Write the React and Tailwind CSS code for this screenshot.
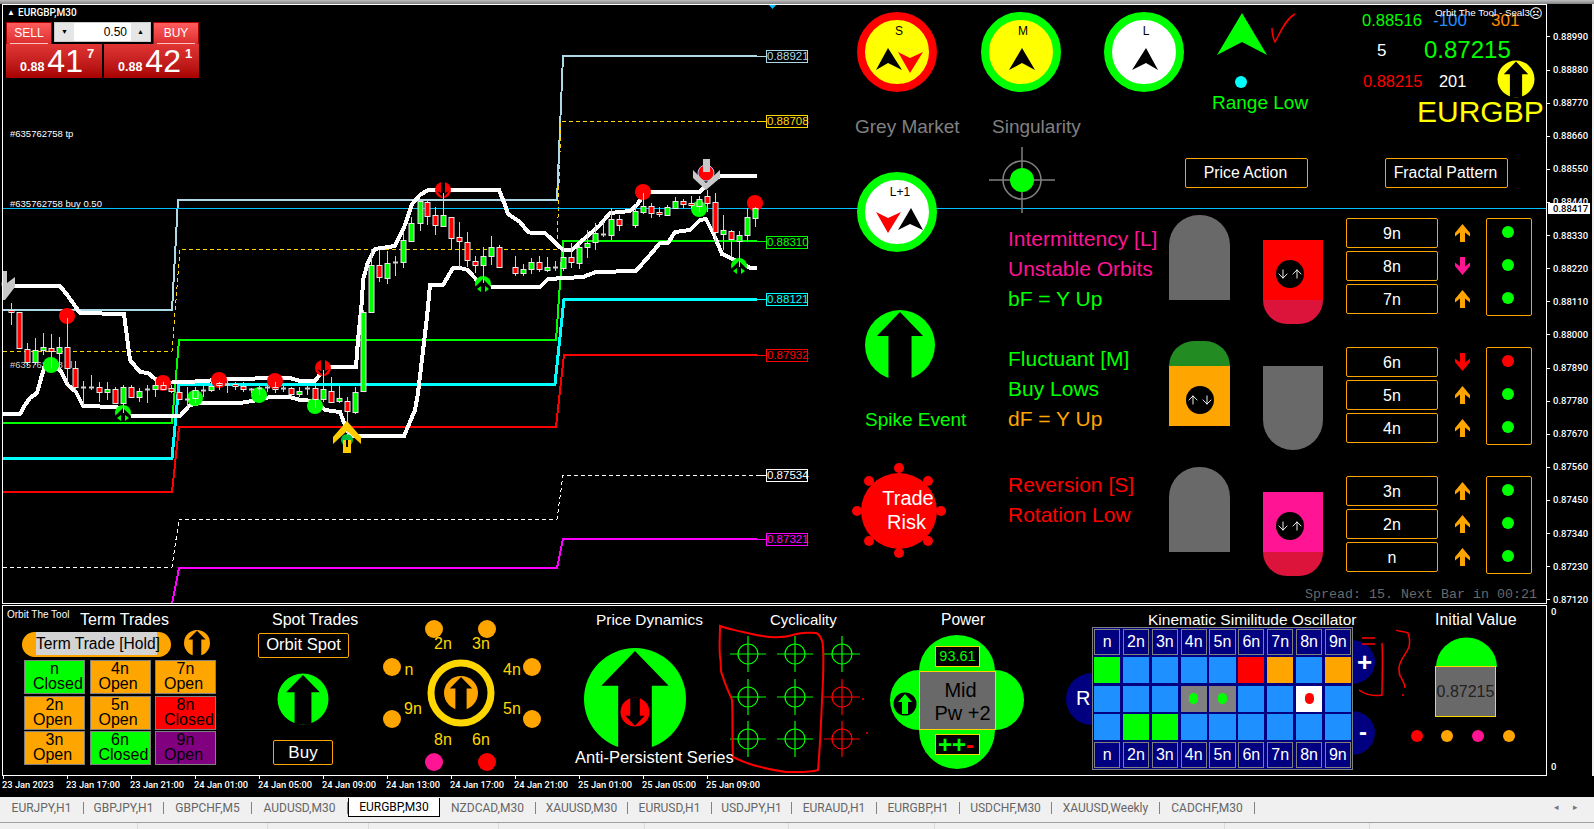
import React from 'react';
import { ArrowUp, ArrowDown } from 'lucide-react';

const GREEN = '#00ff00';
const ORANGE = '#ffa500';

// x, bodyTop, bodyBottom, wickTop, wickBottom, type (g, r, d = doji)
const candles = [
  [11, 310, 312, 303, 325, 'r'], [19, 312, 348, 312, 348, 'r'], [27, 349, 362, 343, 366, 'r'], [35, 350, 362, 338, 365, 'g'],
  [43, 347, 350, 333, 355, 'g'], [51, 348, 351, 334, 368, 'r'], [59, 347, 353, 337, 370, 'g'], [67, 347, 368, 318, 383, 'r'],
  [75, 368, 387, 361, 390, 'r'], [83, 387, 388, 381, 405, 'd'], [91, 387, 388, 375, 390, 'd'], [99, 387, 392, 382, 402, 'r'],
  [107, 389, 392, 382, 400, 'g'], [115, 389, 403, 387, 404, 'r'], [123, 387, 403, 385, 413, 'g'], [131, 387, 397, 385, 398, 'r'],
  [139, 391, 397, 388, 402, 'g'], [147, 389, 389, 385, 403, 'd'], [155, 385, 389, 380, 397, 'g'], [163, 385, 389, 382, 390, 'r'],
  [171, 388, 391, 385, 393, 'r'], [179, 392, 399, 391, 400, 'r'], [187, 399, 399, 387, 407, 'd'], [195, 390, 398, 387, 403, 'g'],
  [203, 390, 390, 385, 397, 'd'], [211, 386, 390, 382, 392, 'g'], [219, 383, 385, 382, 390, 'r'], [227, 384, 384, 380, 393, 'd'],
  [235, 384, 385, 382, 390, 'r'], [243, 386, 389, 382, 392, 'r'], [251, 389, 389, 388, 393, 'd'], [259, 388, 390, 386, 395, 'd'],
  [267, 387, 387, 386, 392, 'd'], [275, 387, 389, 382, 393, 'r'], [283, 388, 388, 386, 392, 'd'], [291, 388, 394, 387, 397, 'r'],
  [299, 391, 394, 387, 397, 'g'], [307, 388, 388, 386, 395, 'd'], [315, 388, 399, 383, 408, 'r'], [323, 389, 399, 370, 402, 'g'],
  [331, 391, 402, 377, 403, 'r'], [339, 398, 401, 386, 403, 'g'], [347, 401, 411, 397, 435, 'r'], [355, 392, 412, 387, 414, 'g'],
  [363, 312, 391, 310, 391, 'g'], [371, 265, 312, 250, 312, 'g'], [379, 265, 277, 250, 282, 'r'], [387, 263, 278, 251, 284, 'g'],
  [395, 262, 262, 256, 276, 'd'], [403, 240, 262, 232, 268, 'g'], [411, 223, 241, 217, 241, 'g'], [420, 201, 223, 199, 231, 'g'],
  [427, 202, 216, 200, 225, 'r'], [435, 215, 225, 207, 235, 'r'], [443, 215, 226, 193, 226, 'g'], [451, 217, 238, 217, 249, 'r'],
  [459, 237, 241, 222, 267, 'r'], [467, 242, 260, 232, 267, 'r'], [475, 261, 265, 256, 273, 'r'], [483, 256, 265, 247, 283, 'g'],
  [491, 247, 256, 236, 265, 'g'], [499, 247, 267, 245, 268, 'r'], [515, 267, 273, 256, 276, 'r'], [523, 269, 273, 264, 276, 'g'],
  [531, 262, 269, 258, 274, 'g'], [539, 262, 269, 256, 272, 'r'], [547, 267, 270, 257, 272, 'g'], [555, 267, 267, 261, 271, 'd'],
  [563, 257, 268, 247, 271, 'g'], [571, 257, 262, 243, 268, 'r'], [579, 247, 263, 243, 269, 'g'], [587, 243, 247, 230, 258, 'g'],
  [595, 233, 242, 223, 250, 'g'], [603, 234, 234, 222, 237, 'd'], [611, 219, 235, 208, 240, 'g'], [619, 219, 225, 215, 231, 'r'],
  [635, 211, 225, 207, 228, 'g'], [643, 206, 212, 193, 214, 'g'], [651, 206, 213, 203, 218, 'r'], [659, 212, 214, 207, 217, 'r'],
  [667, 207, 215, 205, 215, 'g'], [675, 201, 208, 197, 209, 'g'], [683, 201, 204, 199, 208, 'r'], [691, 203, 205, 196, 208, 'r'],
  [699, 199, 206, 196, 212, 'g'], [707, 196, 203, 190, 212, 'r'], [715, 202, 232, 193, 242, 'r'], [723, 230, 234, 215, 250, 'g'],
  [731, 231, 239, 230, 257, 'r'], [739, 235, 241, 231, 267, 'g'], [747, 217, 235, 208, 242, 'g'], [755, 208, 218, 207, 227, 'g'],
];

const upperChannel = '3,286 60,286 68,296 80,313 124,314 130,360 140,372 148,373 160,383 207,381 220,379 290,378 300,381 315,381 322,372 330,367 356,367 358,340 362,300 363,280 368,262 375,249 395,246 405,225 412,204 420,195 428,190 499,190 505,205 508,214 520,222 528,232 532,233 545,233 563,250 572,250 585,238 600,225 610,213 630,211 637,205 642,197 650,192 700,192 705,186 720,176 757,176';
const lowerChannel = '3,414 20,414 25,405 30,398 37,393 42,375 45,365 60,370 68,385 76,392 83,406 117,407 130,416 180,416 190,405 200,403 240,403 258,400 270,397 290,397 300,400 315,401 325,410 340,412 345,425 350,436 404,436 415,410 418,393 427,317 430,285 443,285 453,268 460,268 468,270 480,284 490,287 540,287 548,279 583,277 596,272 636,271 650,255 660,243 668,243 675,232 690,230 700,220 706,219 715,237 722,254 735,260 750,268 757,268';

const steps = [
  { points: '3,310 172,310 178,200 557,200 563,56 757,56', stub: 56, color: '#add8e6', width: 2 },
  { points: '3,351 172,351 180,249 557,249 561,121 766,121', stub: 121, color: '#ffd700', width: 1, dash: '4 3' },
  { points: '3,423 172,423 179,340 556,340 563,241 757,241', stub: 241, color: GREEN, width: 2 },
  { points: '3,458 172,458 179,384 555,384 564,299 757,299', stub: 299, color: '#00ffff', width: 3 },
  { points: '3,492 172,492 179,427 556,427 564,355 757,355', stub: 355, color: '#ff0000', width: 2 },
  { points: '3,567 172,567 179,519 557,519 563,475 766,475', stub: 475, color: '#ffffff', width: 1, dash: '4 3' },
  { points: '172,604 179,568 557,568 563,539 757,539', stub: 539, color: '#ff00ff', width: 2 },
];

const priceTicks = ['0.88990', '0.88880', '0.88770', '0.88660', '0.88550', '0.88440', '0.88330', '0.88220', '0.88110', '0.88000', '0.87890', '0.87780', '0.87670', '0.87560', '0.87450', '0.87340', '0.87230', '0.87120'];
const timeTicks = ['23 Jan 2023', '23 Jan 17:00', '23 Jan 21:00', '24 Jan 01:00', '24 Jan 05:00', '24 Jan 09:00', '24 Jan 13:00', '24 Jan 17:00', '24 Jan 21:00', '25 Jan 01:00', '25 Jan 05:00', '25 Jan 09:00'];

const tabs = [
  { name: 'EURJPY,H1', cls: 'w-[84px]' }, { name: 'GBPJPY,H1', cls: 'w-[80px]' }, { name: 'GBPCHF,M5', cls: 'w-[88px]' },
  { name: 'AUDUSD,M30', cls: 'w-[96px]' }, { name: 'EURGBP,M30', cls: 'w-[92px]', active: true }, { name: 'NZDCAD,M30', cls: 'w-[96px]' },
  { name: 'XAUUSD,M30', cls: 'w-[92px]' }, { name: 'EURUSD,H1', cls: 'w-[84px]' }, { name: 'USDJPY,H1', cls: 'w-[80px]' },
  { name: 'EURAUD,H1', cls: 'w-[85px]' }, { name: 'EURGBP,H1', cls: 'w-[83px]' }, { name: 'USDCHF,M30', cls: 'w-[92px]' },
  { name: 'XAUUSD,Weekly', cls: 'w-[108px]' }, { name: 'CADCHF,M30', cls: 'w-[95px]' },
];

const priceLabels = [
  { text: '0.88921', cls: 'top-[46px] text-[#add8e6] border-[#add8e6]' },
  { text: '0.88708', cls: 'top-[111px] text-[#ffd700] border-[#ffd700]' },
  { text: '0.88310', cls: 'top-[232px] text-[#00ff00] border-[#00ff00]' },
  { text: '0.88121', cls: 'top-[289px] text-[#00ffff] border-[#00ffff]' },
  { text: '0.87932', cls: 'top-[345px] text-[#ff0000] border-[#ff0000]' },
  { text: '0.87534', cls: 'top-[465px] text-white border-white' },
  { text: '0.87321', cls: 'top-[529px] text-[#ff00ff] border-[#ff00ff]' },
];

const cycleGroups = [
  { rows: [['9n', 'up', 'g'], ['8n', 'pink', 'g'], ['7n', 'up', 'g']] },
  { rows: [['6n', 'red', 'r'], ['5n', 'up', 'g'], ['4n', 'up', 'g']] },
  { rows: [['3n', 'up', 'g'], ['2n', 'up', 'g'], ['n', 'up', 'g']] },
];

const tradeCells = [
  ['n', 'Closed', 'bg-[#00ff00]'], ['4n', 'Open', 'bg-[#ffa500]'], ['7n', 'Open', 'bg-[#ffa500]'],
  ['2n', 'Open', 'bg-[#ffa500]'], ['5n', 'Open', 'bg-[#ffa500]'], ['8n', 'Closed', 'bg-[#ff0000]'],
  ['3n', 'Open', 'bg-[#ffa500]'], ['6n', 'Closed', 'bg-[#00ff00]'], ['9n', 'Open', 'bg-[#800080]'],
];

const orbitLabels = [
  { t: '2n', cls: 'left-[443px] top-[30px]' }, { t: '3n', cls: 'left-[481px] top-[30px]' },
  { t: 'n', cls: 'left-[409px] top-[56px]' }, { t: '4n', cls: 'left-[512px] top-[56px]' },
  { t: '9n', cls: 'left-[413px] top-[95px]' }, { t: '5n', cls: 'left-[512px] top-[95px]' },
  { t: '8n', cls: 'left-[443px] top-[126px]' }, { t: '6n', cls: 'left-[481px] top-[126px]' },
];

const oscHeader = ['n', '2n', '3n', '4n', '5n', '6n', '7n', '8n', '9n'];
const B = 'bg-[#1e90ff]';
const oscRows = [
  ['bg-[#00ff00]', B, B, B, B, 'bg-[#ff0000]', 'bg-[#ffa500]', B, 'bg-[#ffa500]'],
  [B, B, B, 'bg-[#808080]', 'bg-[#808080]', B, B, 'bg-white', B],
  [B, 'bg-[#00ff00]', 'bg-[#00ff00]', B, B, B, B, B, B],
];

// circle with a block arrow cut out of it; r scales the whole shape
function Disc({ cx, cy, r, fill, arrow = '#000000', down = false }) {
  return (
    <g transform={`translate(${cx} ${cy}) scale(${r / 50} ${(down ? -1 : 1) * r / 50})`}>
      <circle r="50" fill={fill} />
      <polygon fill={arrow} points="0,-47 33,-13 16.5,-13 16.5,50 -16.5,50 -16.5,-13 -33,-13" />
    </g>
  );
}

function Crosshair({ cx, cy, color }) {
  return (
    <g stroke={color} strokeWidth="1.2" fill="none">
      <circle cx={cx} cy={cy} r="10" />
      <path d={`M${cx - 18} ${cy}H${cx + 18}M${cx} ${cy - 18}V${cy + 18}`} />
    </g>
  );
}

function RowArrow({ kind }) {
  const fill = kind === 'up' ? ORANGE : kind === 'pink' ? '#ff1493' : '#ff0000';
  return (
    <svg width="15" height="18" viewBox="0 0 15 18" className={kind === 'up' ? '' : 'rotate-180'}>
      <polygon fill={fill} points="7.5,0 15,9 15,12.5 10,8.5 10,18 5,18 5,8.5 0,12.5 0,9" />
    </svg>
  );
}

function SmallArrows({ first = 'down' }) {
  const A = first === 'down' ? ArrowDown : ArrowUp;
  const C = first === 'down' ? ArrowUp : ArrowDown;
  return (
    <div className="flex h-[28px] w-[28px] items-center justify-center rounded-full bg-black text-white">
      <A size={14} strokeWidth={1.6} />
      <C size={14} strokeWidth={1.6} />
    </div>
  );
}

function ChartDrawing() {
  return (
    <svg className="absolute inset-0" width="1547" height="600" viewBox="0 4 1547 600">
      {/* indicator steps */}
      {steps.map((s) => (
        <g key={s.points} shapeRendering="crispEdges">
          <polyline points={s.points} fill="none" stroke={s.color} strokeWidth={s.width} strokeDasharray={s.dash} />
          <path d={`M757 ${s.stub}H767`} stroke={s.color} strokeWidth="1" />
        </g>
      ))}
      <path d="M3 208.5H1547" stroke="#00bfff" strokeWidth="1" />
      <polygon points="768,4 777,4 772.5,9" fill="#00bfff" />

      {/* channel */}
      <polyline points={upperChannel} fill="none" stroke="#fff" strokeWidth="4" shapeRendering="crispEdges" />
      <polyline points={lowerChannel} fill="none" stroke="#fff" strokeWidth="4" shapeRendering="crispEdges" />

      {/* signal dots */}
      {[[67, 316], [163, 383], [219, 380], [275, 381], [643, 192], [755, 203]].map(([x, y]) => (
        <circle key={x} cx={x} cy={y} r="8" fill="#ff0000" />
      ))}
      {[[51, 365], [195, 398], [259, 395], [315, 406], [699, 209]].map(([x, y]) => (
        <circle key={x} cx={x} cy={y} r="8" fill={GREEN} />
      ))}
      {[[323, 368], [443, 190]].map(([x, y]) => (
        <g key={x}>
          <circle cx={x} cy={y} r="8" fill="#ff0000" />
          <path d={`M${x - 6} ${y + 1}L${x} ${y + 8}L${x + 6} ${y + 1}L${x + 2} ${y + 3}V${y - 8}H${x - 2}V${y + 3}Z`} fill="#000" />
        </g>
      ))}
      {[[123, 413], [483, 284], [739, 266]].map(([x, y]) => (
        <g key={x}>
          <circle cx={x} cy={y} r="8" fill={GREEN} />
          <path d={`M${x} ${y - 5}L${x + 8} ${y + 3}V${y + 9}H${x - 8}V${y + 3}Z`} fill="#000" />
          <path d={`M${x - 6} ${y + 5}L${x - 2} ${y + 2}V${y + 8}ZM${x + 6} ${y + 5}L${x + 2} ${y + 2}V${y + 8}Z`} fill={GREEN} />
        </g>
      ))}

      {/* marks sitting behind the candles */}
      <circle cx="347" cy="440" r="6" fill="#00c040" />
      <circle cx="706" cy="173" r="8" fill="#ff0000" stroke="#a0c8ff" strokeWidth="1" />
      <circle cx="4" cy="284" r="3" fill="#ff0000" />

      {/* candles */}
      {candles.map(([x, top, bottom, hi, lo, type]) => (
        <g key={x}>
          <path d={`M${x + 0.5} ${hi}V${lo}`} stroke="#cfcfcf" strokeWidth="1" />
          {type === 'd' ? (
            <path d={`M${x - 2} ${top + 0.5}H${x + 3}`} stroke="#cfcfcf" strokeWidth="2" />
          ) : (
            <rect x={x - 2} y={top + 0.5} width="5" height={Math.max(bottom - top, 2)} fill={type === 'g' ? GREEN : '#ff0000'} stroke="#e8e8e8" strokeWidth="1" />
          )}
        </g>
      ))}

      {/* position arrows */}
      <polygon points="347,421 361,437 361,444 347,431 333,444 333,437" fill="#ffcc00" />
      <rect x="343" y="440" width="8" height="13" fill="#ffcc00" />
      <path d="M347 440V447" stroke="#000" strokeWidth="2" />
      <polygon points="693,170 706,183 720,170 720,178 706,190 693,178" fill="#c8c8c8" />
      <rect x="703" y="159" width="7" height="13" fill="#c8c8c8" />
      <polygon points="3,271 7,271 7,283 15,277 15,287 5,300 3,300" fill="#c8c8c8" />

      {/* timeframe rings */}
      <circle cx="897" cy="52" r="36" fill="#ffff00" stroke="#ff0000" strokeWidth="8" />
      <polygon points="888,48 902,70 888,63 876,70" fill="#000" />
      <polygon points="898,52 910,58 923,52 910,73" fill="#ff0000" />
      <circle cx="1021" cy="52" r="36" fill="#ffff00" stroke={GREEN} strokeWidth="8" />
      <polygon points="1022,48 1035,70 1022,63 1009,70" fill="#000" />
      <circle cx="1144" cy="52" r="36" fill="#fff" stroke={GREEN} strokeWidth="8" />
      <polygon points="1146,48 1158,70 1146,63 1132,70" fill="#000" />
      <circle cx="897" cy="212" r="36" fill="#fff" stroke={GREEN} strokeWidth="8" />
      <polygon points="876,212 888,218 901,212 888,233" fill="#ff0000" />
      <polygon points="911,208 923,230 910,224 898,230" fill="#000" />

      {/* singularity target */}
      <circle cx="1022" cy="180" r="19" fill="none" stroke="#808080" strokeWidth="1.5" />
      <path d="M989 180H1055M1022 147V213" stroke="#808080" strokeWidth="1.5" />
      <circle cx="1022" cy="180" r="12" fill={GREEN} />

      {/* range arrow, note, dot */}
      <polygon points="1242,13 1267,55 1242,42 1217,55" fill={GREEN} />
      <path d="M1272 28C1272 33 1273 38 1275 42C1279 36 1284 20 1295 14" fill="none" stroke="#ff0000" strokeWidth="1.5" />
      <circle cx="1241" cy="82" r="6" fill="#00ffff" />
      <Disc cx={1516} cy={79} r={18.5} fill="#ffff00" />

      <Disc cx={900} cy={345} r={35} fill={GREEN} />

      {/* trade risk burst */}
      {[[899, 468], [857, 511], [941, 511], [869, 481], [928, 481], [869, 541], [928, 541], [899, 553]].map(([x, y]) => (
        <circle key={`${x}-${y}`} cx={x} cy={y} r="5" fill="#ff0000" />
      ))}
      <circle cx="899" cy="511" r="38" fill="#ff0000" />
    </svg>
  );
}

function PanelDrawing() {
  return (
    <svg className="absolute inset-0" width="1547" height="171" viewBox="0 605 1547 171">
      <Disc cx={197} cy={643} r={13} fill={ORANGE} />
      <Disc cx={303} cy={699} r={25.5} fill={GREEN} />

      {/* orbit */}
      {[[434, 629, ORANGE], [487, 629, ORANGE], [392, 667, ORANGE], [532, 667, ORANGE], [392, 719, ORANGE], [532, 719, ORANGE], [434, 762, '#ff1493'], [487, 762, '#ff0000']].map(([x, y, c]) => (
        <circle key={`${x}-${y}`} cx={x} cy={y} r="9" fill={c} />
      ))}
      <circle cx="461" cy="693" r="30" fill="none" stroke="#ffd700" strokeWidth="7" />
      <Disc cx={461} cy={693} r={17} fill={ORANGE} />

      <Disc cx={635} cy={699} r={51} fill={GREEN} />
      <Disc cx={635} cy={712} r={14.5} fill="#ff0000" down />

      {/* cycle targets */}
      {[[748, 654], [795, 654], [842, 654], [748, 697], [795, 697], [748, 739], [795, 739]].map(([x, y]) => (
        <Crosshair key={`${x}-${y}`} cx={x} cy={y} color={GREEN} />
      ))}
      <Crosshair cx={842} cy={697} color="#ff0000" />
      <Crosshair cx={842} cy={739} color="#ff0000" />
      <circle cx="863" cy="699" r="1" fill="#ff0000" />
      <circle cx="867" cy="733" r="1" fill="#ff0000" />
      <path d="M720 626C728 629 735 630 743 632C755 635 768 638 780 637C790 637 796 633 803 633C810 633 816 632 818 634C822 638 823 642 823 647C824 665 823 683 822 700C821 725 820 748 818 770C808 773 797 772 787 772C775 771 764 768 753 765C746 763 739 760 733 757C732 738 733 718 732 700C729 692 725 685 723 677C719 670 722 665 720 657C719 647 720 636 720 626Z" fill="none" stroke="#ff0000" strokeWidth="2" />

      {/* power lobes */}
      <ellipse cx="957" cy="671" rx="38" ry="36" fill={GREEN} />
      <ellipse cx="957" cy="730" rx="38" ry="39" fill={GREEN} />
      <ellipse cx="919" cy="700" rx="29" ry="30" fill={GREEN} />
      <ellipse cx="995" cy="700" rx="29" ry="30" fill={GREEN} />
      <circle cx="905" cy="704" r="11.5" fill="#000" />
      <polygon points="905,694 912,702 908,702 908,714 902,714 902,702 898,702" fill={GREEN} />

      {/* oscillator lobes */}
      <ellipse cx="1092" cy="699" rx="26" ry="26" fill="#000080" />
      <ellipse cx="1352" cy="662" rx="23" ry="22" fill="#000080" />
      <ellipse cx="1352" cy="733" rx="23" ry="22" fill="#000080" />

      {/* hand notes */}
      <path d="M1362 638H1375M1362 644H1375M1382 643C1383 660 1382 680 1382 695C1376 696 1367 696 1359 690M1396 630C1399 632 1404 631 1408 633C1410 638 1410 642 1409 647C1406 654 1400 660 1399 667C1399 672 1400 677 1401 677C1403 682 1405 684 1405 688M1403 694V696" fill="none" stroke="#ff0000" strokeWidth="1.5" />

      {/* initial value dome and dots */}
      <path d="M1436 667A30 29 0 0 1 1497 667Z" fill={GREEN} />
      {[[1417, '#ff0000'], [1447, ORANGE], [1478, '#ff1493'], [1509, ORANGE]].map(([x, c]) => (
        <circle key={x} cx={x} cy="736" r="6" fill={c} />
      ))}
    </svg>
  );
}

function TradePanel() {
  return (
    <div className="absolute left-[6px] top-[18px] flex w-[193px] flex-col text-white">
      <div className="flex h-[22px] justify-between">
        <div className="h-[23px] w-[46px] border border-[#a80000] bg-gradient-to-b from-[#ff5c5c] to-[#d92c2c] px-[3px] text-center text-[12px] leading-[20px]">
          <div className="border-b border-[#ffc0c0] pb-0">SELL</div>
        </div>
        <div className="flex h-[20px] w-[97px] bg-[#c8c8c8] p-px text-black">
          <div className="flex w-[19px] items-center justify-center bg-[#e6e6e6] text-[7px]">▼</div>
          <div className="w-[57px] bg-white pr-[4px] text-right text-[12px] leading-[18px]">0.50</div>
          <div className="flex w-[19px] items-center justify-center bg-[#e6e6e6] text-[7px]">▲</div>
        </div>
        <div className="h-[23px] w-[46px] border border-[#a80000] bg-gradient-to-b from-[#ff5c5c] to-[#d92c2c] px-[3px] text-center text-[12px] leading-[20px]">
          <div className="border-b border-[#ffc0c0]">BUY</div>
        </div>
      </div>
      <div className="flex justify-between">
        <div className="flex h-[34px] w-[96px] items-start bg-gradient-to-b from-[#e23535] to-[#a80000] pl-[14px]">
          <span className="mt-[15px] text-[12.5px] font-bold leading-[16px]">0.88</span>
          <span className="ml-[3px] text-[32px] leading-[34px]">41</span>
          <span className="ml-[4px] mt-[2px] text-[13px] font-bold leading-[16px]">7</span>
        </div>
        <div className="flex h-[34px] w-[95px] items-start bg-gradient-to-b from-[#e23535] to-[#a80000] pl-[14px]">
          <span className="mt-[15px] text-[12.5px] font-bold leading-[16px]">0.88</span>
          <span className="ml-[3px] text-[32px] leading-[34px]">42</span>
          <span className="ml-[4px] mt-[2px] text-[13px] font-bold leading-[16px]">1</span>
        </div>
      </div>
    </div>
  );
}

function SignalBlocks() {
  return (
    <div className="absolute left-[1008px] top-[211px] flex text-[21px] leading-[30px]">
      <div className="flex w-[161px] flex-col pt-[9px] whitespace-nowrap">
        <div className="text-[#ff1493]">
          <div>Intermittency [L]</div>
          <div>Unstable Orbits</div>
          <div className="text-[#00ff00]">bF = Y Up</div>
        </div>
        <div className="mt-[30px] text-[#00ff00]">
          <div>Fluctuant [M]</div>
          <div>Buy Lows</div>
          <div className="text-[#ffa500]">dF = Y Up</div>
        </div>
        <div className="mt-[36px] text-[#ff0000]">
          <div>Reversion [S]</div>
          <div>Rotation Low</div>
        </div>
      </div>
      <div className="flex w-[61px] flex-col gap-[41px]">
        <div className="h-[85px] rounded-t-[30px] bg-[#696969]" />
        <div className="flex h-[85px] flex-col">
          <div className="h-[25px] rounded-t-[30px] bg-[#228b22]" />
          <div className="flex h-[60px] items-center justify-center bg-[#ffa500] pt-[8px]"><SmallArrows first="up" /></div>
        </div>
        <div className="h-[85px] rounded-t-[30px] bg-[#696969]" />
      </div>
      <div className="ml-[33px] mt-[25px] flex w-[60px] flex-col gap-[42px]">
        <div className="flex h-[84px] flex-col">
          <div className="flex h-[60px] items-center justify-center bg-[#ff0000] pr-[6px] pt-[8px]"><SmallArrows /></div>
          <div className="h-[24px] rounded-b-[30px] bg-[#dc143c]" />
        </div>
        <div className="h-[84px] rounded-b-[30px] bg-[#696969]" />
        <div className="flex h-[84px] flex-col">
          <div className="flex h-[60px] items-center justify-center bg-[#ff1493] pr-[6px] pt-[8px]"><SmallArrows /></div>
          <div className="h-[24px] rounded-b-[30px] bg-[#dc143c]" />
        </div>
      </div>
      <div className="ml-[23px] mt-[3px] flex flex-col gap-[31px]">
        {cycleGroups.map((group) => (
          <div key={group.rows[0][0]} className="flex h-[98px]">
            <div className="flex w-[92px] flex-col gap-[3px]">
              {group.rows.map(([label]) => (
                <div key={label} className="flex h-[30px] items-center justify-center rounded-[2px] border border-[#ffa500] pt-px text-[16px] text-white">{label}</div>
              ))}
            </div>
            <div className="flex w-[48px] flex-col gap-[3px]">
              {group.rows.map(([label, arrow]) => (
                <div key={label} className="flex h-[30px] items-center justify-center"><RowArrow kind={arrow} /></div>
              ))}
            </div>
            <div className="flex w-[46px] flex-col items-center gap-[21px] rounded-[2px] border border-[#ffa500] pr-[2px] pt-[7px]">
              {group.rows.map(([label, , dot]) => (
                <div key={label} className={dot === 'g' ? 'h-[12px] w-[12px] rounded-full bg-[#00ff00]' : 'h-[12px] w-[12px] rounded-full bg-[#ff0000]'} />
              ))}
            </div>
          </div>
        ))}
      </div>
    </div>
  );
}

function Oscillator() {
  return (
    <div className="absolute left-[1092px] top-[22px] grid h-[143px] w-[261px] grid-cols-9 grid-rows-[26px_26px_26px_26px_26px] content-center gap-x-[2.6px] gap-y-[2.4px] border border-[#808080] bg-[#000080] px-[1px] text-white">
      {oscHeader.map((h) => (
        <div key={h} className="flex items-center justify-center border border-[#808080] text-[16px]">{h}</div>
      ))}
      {oscRows.map((row, r) =>
        row.map((c, i) => (
          <div key={`${r}-${i}`} className={`flex items-center justify-center ${c}`}>
            {r === 1 && (i === 3 || i === 4) && <div className="h-[11px] w-[9px] rounded-full bg-[#00ff00]" />}
            {r === 1 && i === 7 && <div className="h-[11px] w-[9px] rounded-full bg-[#ff0000]" />}
          </div>
        )),
      )}
      {oscHeader.map((h) => (
        <div key={`f-${h}`} className="flex items-center justify-center border border-[#808080] text-[16px]">{h}</div>
      ))}
    </div>
  );
}

function IndicatorPanel() {
  return (
    <div className="relative h-[171px] w-[1547px]">
      <PanelDrawing />
      <div className="absolute left-[7px] top-[4px] text-[10px] leading-[12px] text-white">Orbit The Tool</div>

      <div className="absolute left-[80px] top-[6px] text-[16px] leading-[18px] text-white">Term Trades</div>
      <div className="absolute left-[272px] top-[6px] text-[16px] leading-[18px] text-white">Spot Trades</div>
      <div className="absolute left-[596px] top-[6px] text-[15.4px] leading-[18px] text-white">Price Dynamics</div>
      <div className="absolute left-[770px] top-[6px] text-[15px] leading-[18px] text-white">Cyclicality</div>
      <div className="absolute left-[941px] top-[6px] text-[15.6px] leading-[18px] text-white">Power</div>
      <div className="absolute left-[1148px] top-[6px] text-[15.5px] leading-[18px] whitespace-nowrap text-white">Kinematic Similitude Oscillator</div>
      <div className="absolute left-[1435px] top-[6px] text-[16px] leading-[18px] text-white">Initial Value</div>

      {/* hold switch */}
      <div className="absolute left-[22px] top-[27px] flex h-[25px] w-[149px] justify-center rounded-full bg-[#ffa500]">
        <div className="h-[23px] w-[121px] bg-[#d3d3d3] text-center text-[15.6px] leading-[23px] whitespace-nowrap text-black">Term Trade [Hold]</div>
      </div>

      <div className="absolute left-[24px] top-[55px] grid grid-cols-[61px_61px_61px] grid-rows-[34px_34px_34px] gap-x-[4.5px] gap-y-[1.5px] text-[16px] leading-[15px] text-black">
        {tradeCells.map(([a, b, bg]) => (
          <div key={a} className={`overflow-hidden border border-[#808080] ${bg}`}>
            <div className="text-center">{a}</div>
            <div className="pl-[8px]">{b}</div>
          </div>
        ))}
      </div>

      <div className="absolute left-[258px] top-[28px] flex h-[25px] w-[91px] items-center justify-center rounded-[2px] border border-[#ffa500] text-[16.6px] text-white">Orbit Spot</div>
      <div className="absolute left-[273px] top-[135px] flex h-[25px] w-[60px] items-center justify-center rounded-[2px] border border-[#ffa500] text-[17px] text-white">Buy</div>

      {orbitLabels.map((l) => (
        <div key={l.t} className={`absolute -translate-x-1/2 text-[16px] leading-[18px] text-[#ffd700] ${l.cls}`}>{l.t}</div>
      ))}

      <div className="absolute left-[575px] top-[142px] text-[16.5px] leading-[20px] whitespace-nowrap text-white">Anti-Persistent Series</div>

      {/* power */}
      <div className="absolute left-[919px] top-[66px] flex h-[59px] w-[77px] flex-col items-center justify-center border border-[#ffd700] bg-[#696969] pt-[3px] text-[20px] leading-[23px] text-black">
        <div className="pl-[6px]">Mid</div>
        <div className="pl-[10px] whitespace-nowrap">Pw +2</div>
      </div>
      <div className="absolute left-[935px] top-[41px] flex h-[21px] w-[45px] items-center justify-center border border-[#ffd700] bg-black text-[14.5px] text-[#00ff00]">93.61</div>
      <div className="absolute left-[935px] top-[129px] flex h-[21px] w-[45px] items-center border border-[#ffd700] bg-black pl-[2px] text-[24px] leading-[16px] font-bold text-[#00ff00]">
        <span>++</span><span className="text-[#ff0000]">-</span>
      </div>

      <div className="absolute left-[1076px] top-[81px] text-[20px] leading-[24px] text-white">R</div>
      <div className="absolute left-[1357px] top-[43px] text-[26px] font-bold leading-[28px] text-white">+</div>
      <div className="absolute left-[1359px] top-[114px] text-[24px] font-bold leading-[26px] text-white">-</div>

      <Oscillator />

      <div className="absolute left-[1435px] top-[61px] flex h-[51px] w-[61px] items-center justify-center border border-[#ffd700] bg-[#696969] text-[16px] text-[#222]">0.87215</div>

      <div className="pointer-events-none absolute inset-y-0 left-[2px] right-0 border border-white" />
    </div>
  );
}

function ChartPanel() {
  return (
    <div className="relative h-[600px] w-[1547px] overflow-hidden">
      {/* this order line label lies under the candles */}
      <div className="absolute left-[10px] top-[355px] text-[9.5px] leading-[12px] text-[#d0d0d0]">#635762758 sl</div>
      <ChartDrawing />

      <div className="absolute left-[18px] top-[2px] text-[10px] font-medium leading-[13px] text-white [font-family:Roboto,sans-serif]">EURGBP,M30</div>
      <div className="absolute left-[7px] top-[3px] text-[8px] leading-[11px] text-white">▲</div>
      <TradePanel />

      <div className="absolute left-[10px] top-[124px] text-[9.5px] leading-[12px] text-white">#635762758 tp</div>
      <div className="absolute left-[10px] top-[194px] text-[9.5px] leading-[12px] text-white">#635762758 buy 0.50</div>

      {priceLabels.map((p) => (
        <div key={p.text} className={`absolute left-[766px] h-[13px] w-[42px] border bg-black text-center text-[11.5px] leading-[11px] ${p.cls}`}>{p.text}</div>
      ))}

      <div className="absolute left-[899px] top-[21px] -translate-x-1/2 text-[12px] leading-[12px] text-black">S</div>
      <div className="absolute left-[1023px] top-[21px] -translate-x-1/2 text-[12px] leading-[12px] text-black">M</div>
      <div className="absolute left-[1146px] top-[21px] -translate-x-1/2 text-[12px] leading-[12px] text-black">L</div>
      <div className="absolute left-[900px] top-[182px] -translate-x-1/2 text-[12px] leading-[12px] text-black">L+1</div>

      <div className="absolute left-[855px] top-[113px] text-[19px] leading-[20px] text-[#808080]">Grey Market</div>
      <div className="absolute left-[992px] top-[113px] text-[19px] leading-[20px] text-[#808080]">Singularity</div>
      <div className="absolute left-[1212px] top-[89px] text-[19px] leading-[20px] text-[#00ff00]">Range Low</div>
      <div className="absolute left-[865px] top-[406px] text-[19px] leading-[20px] text-[#00ff00]">Spike Event</div>
      <div className="absolute left-[908px] top-[482px] -translate-x-1/2 text-center text-[20px] leading-[24px] text-white">
        <div>Trade</div>
        <div className="-ml-[3px]">Risk</div>
      </div>

      <div className="absolute left-[1362px] top-[7px] text-[16.6px] leading-[20px] text-[#00ff00]">0.88516</div>
      <div className="absolute left-[1433px] top-[7px] text-[17px] leading-[20px] text-[#1e90ff]">-100</div>
      <div className="absolute left-[1491px] top-[7px] text-[17px] leading-[20px] text-[#ff8c00]">301</div>
      <div className="absolute left-[1435px] top-[3px] text-[9.8px] leading-[12px] whitespace-nowrap text-white">Orbit The Tool - Seal3</div>
      <div className="absolute left-[1529px] top-[1px] text-[13px] leading-[18px] text-white [font-family:'DejaVu_Sans',sans-serif]">☹</div>
      <div className="absolute left-[1377px] top-[37px] text-[17px] leading-[20px] text-white">5</div>
      <div className="absolute left-[1424px] top-[32px] text-[24px] leading-[28px] text-[#00ff00]">0.87215</div>
      <div className="absolute left-[1363px] top-[67px] text-[16.4px] leading-[20px] text-[#ff0000]">0.88215</div>
      <div className="absolute left-[1439px] top-[67px] text-[16.4px] leading-[20px] text-white">201</div>
      <div className="absolute left-[1417px] top-[91px] text-[30px] leading-[34px] text-[#ffff00]">EURGBP</div>

      <div className="absolute left-[1185px] top-[154px] flex h-[30px] w-[123px] items-center justify-center rounded-[2px] border border-[#ffa500] pr-[2px] text-[15.8px] text-white">Price Action</div>
      <div className="absolute left-[1385px] top-[154px] flex h-[30px] w-[123px] items-center justify-center rounded-[2px] border border-[#ffa500] pr-[2px] text-[15.8px] text-white">Fractal Pattern</div>

      <SignalBlocks />

      <div className="absolute left-[1305px] top-[583px] text-[13.33px] leading-[15px] whitespace-nowrap text-[#696969] [font-family:'Liberation_Mono',monospace]">Spread: 15. Next Bar in 00:21</div>

      <div className="pointer-events-none absolute inset-y-0 left-[2px] right-0 border border-white" />
    </div>
  );
}

function PriceAxis() {
  return (
    <div className="relative h-[772px] w-[45px] overflow-hidden text-[9.5px] leading-[12px] text-white [font-family:Roboto,sans-serif] font-medium">
      <div className="flex flex-col pt-[16.4px]">
        {priceTicks.map((t) => (
          <div key={t} className="flex h-[33.12px] shrink-0 items-center">
            <div className="h-px w-[3px] bg-white" />
            <div className="ml-[3px]">{t}</div>
          </div>
        ))}
      </div>
      <div className="absolute left-[1px] top-[199px] h-[11px] w-[42px] bg-white pl-[5px] leading-[11px] text-black">0.88417</div>
      <div className="absolute left-[4px] top-[602px]">0</div>
      <div className="absolute left-[4px] top-[757px]">0</div>
    </div>
  );
}

export default function App() {
  return (
    <div className="flex h-[829px] w-[1594px] flex-col overflow-hidden bg-black [font-family:'Liberation_Sans',Arial,sans-serif]">
      <div className="h-[4px] bg-gradient-to-b from-[#c0c0c0] to-[#808080]" />
      <div className="flex h-[772px]">
        <div className="flex w-[1547px] flex-col gap-px">
          <ChartPanel />
          <IndicatorPanel />
        </div>
        <PriceAxis />
        <div className="w-[2px] bg-[#f0f0f0]" />
      </div>

      {/* time axis */}
      <div className="flex h-[21px] pl-[3px] text-[9.3px] leading-[12px] text-white [font-family:Roboto,sans-serif] font-medium">
        {timeTicks.map((t) => (
          <div key={t} className="w-[64px]">
            <div className="h-[3px] w-px bg-white" />
            <div className="-ml-px whitespace-nowrap">{t}</div>
          </div>
        ))}
      </div>

      {/* tabs */}
      <div className="flex h-[25px] bg-[#f0f0f0] text-[12px] text-[#666] [font-family:Roboto,sans-serif]">
        <div className="flex h-[20px] items-stretch pt-px">
          {tabs.map((tab) =>
            tab.active ? (
              <div key={tab.name} className={`flex items-center justify-center border-x border-b border-black bg-white text-black ${tab.cls}`}>{tab.name}</div>
            ) : (
              <div key={tab.name} className={`flex items-center justify-center ${tab.cls}`}>
                <span className="flex-1 text-center">{tab.name}</span>
                <span className="h-[12px] w-px bg-[#808080]" />
              </div>
            ),
          )}
        </div>
        <div className="ml-auto flex gap-[14px] pr-[16px] pt-[4px] text-[9px] text-[#777]">
          <span>◂</span>
          <span>▸</span>
        </div>
      </div>

      {/* status bar */}
      <div className="flex h-[7px] border-t border-[#a0a0a0] bg-[#f0f0f0]">
        <div className="w-[138px] border-r border-[#dcdcdc]" />
        <div className="w-[130px] border-r border-[#dcdcdc]" />
        <div className="w-[101px] border-r border-[#dcdcdc]" />
        <div className="w-[130px] border-r border-[#dcdcdc]" />
        <div className="w-[146px] border-r border-[#dcdcdc]" />
        <div className="w-[144px] border-r border-[#dcdcdc]" />
        <div className="w-[146px] border-r border-[#dcdcdc]" />
        <div className="w-[290px] border-r border-[#dcdcdc]" />
        <div className="w-[145px] border-r border-[#dcdcdc]" />
      </div>
    </div>
  );
}
